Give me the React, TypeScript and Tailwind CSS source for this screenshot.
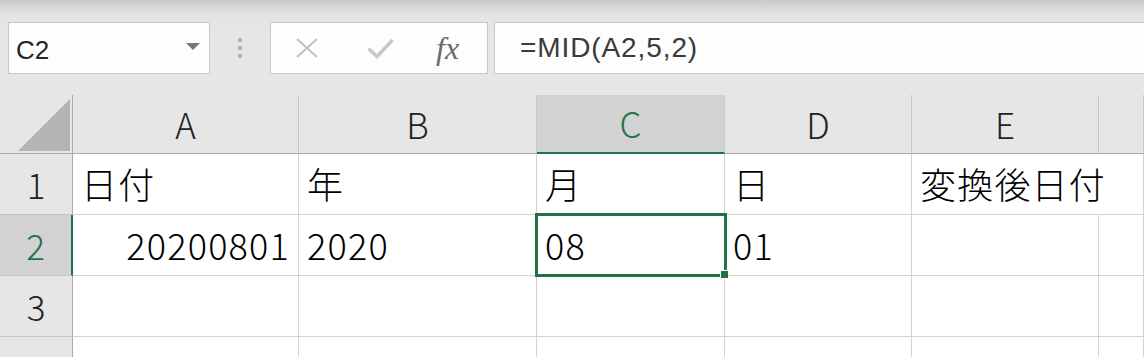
import React from 'react'

const columns = ['A', 'B', 'C', 'D', 'E', '']

type Cell = { text: string; align?: 'right'; overflow?: boolean }

const rows: { n: number; cells: Cell[] }[] = [
  {
    n: 1,
    cells: [
      { text: '日付' },
      { text: '年' },
      { text: '月' },
      { text: '日' },
      { text: '変換後日付', overflow: true },
      { text: '' },
    ],
  },
  {
    n: 2,
    cells: [
      { text: '20200801', align: 'right' },
      { text: '2020' },
      { text: '08' },
      { text: '01' },
      { text: '' },
      { text: '' },
    ],
  },
  { n: 3, cells: [{ text: '' }, { text: '' }, { text: '' }, { text: '' }, { text: '' }, { text: '' }] },
  { n: 4, cells: [{ text: '' }, { text: '' }, { text: '' }, { text: '' }, { text: '' }, { text: '' }] },
]

// active cell is C2
const activeCol = 2
const activeRow = 2

function FormulaBar() {
  return (
    <div className="flex h-[95px] items-start overflow-hidden bg-[linear-gradient(to_bottom,#c8c8c8_0px,#e3e3e3_14px,#e6e6e6_30px)] pl-[8px] pt-[22px]">
      {/* Name box */}
      <div className="flex h-[52px] w-[202px] shrink-0 items-center justify-between border border-[#c6c6c6] bg-[#fdfdfd] pl-[7px] pr-[9px]">
        <span className="mt-[3px] text-[26px] leading-none text-[#262626]">C2</span>
        <svg width="14" height="7" viewBox="0 0 14 7" className="-mt-[4px]">
          <path d="M0 0H14L7 7Z" fill="#777777" />
        </svg>
      </div>

      {/* Grip */}
      <div className="flex h-[52px] w-[60px] shrink-0 flex-col items-center justify-center gap-[4px]">
        <div className="h-[4px] w-[4px] bg-[#b4b4b4]" />
        <div className="h-[4px] w-[4px] bg-[#b4b4b4]" />
        <div className="h-[4px] w-[4px] bg-[#b4b4b4]" />
      </div>

      {/* Cancel / Enter / Insert function */}
      <div className="flex h-[52px] w-[218px] shrink-0 items-center border border-[#c6c6c6] bg-[#fdfdfd] pl-[25px]">
        <svg width="22" height="20" viewBox="0 0 22 20">
          <path d="M1 1L21 19M21 1L1 19" stroke="#c4c4c4" strokeWidth="2.2" />
        </svg>
        <svg width="27" height="21" viewBox="0 0 27 21" className="ml-[49px]">
          <path
            d="M1.5 10.5L10 18.5L25.5 2"
            stroke="#c8c8c8"
            strokeWidth="3.6"
            fill="none"
          />
        </svg>
        <span className="ml-[42px] font-['Liberation_Serif',serif] text-[32px] italic leading-none text-[#6a6a6a]">
          fx
        </span>
      </div>

      {/* Formula input */}
      <div className="-mr-[4px] ml-[6px] flex h-[52px] flex-1 items-center border border-[#c6c6c6] bg-[#fdfdfd] pl-[25px]">
        <span className="text-[28px] leading-none tracking-[0.9px] text-[#3a3a3a]">
          =MID(A2,5,2)
        </span>
      </div>
    </div>
  )
}

function Sheet() {
  return (
    <div className="grid grid-cols-[73px_226px_238px_188px_187px_187px_1fr] font-['Noto_Sans_CJK_JP',sans-serif] font-light">
      {/* corner */}
      <div className="flex h-[59px] items-end justify-end border-r border-b border-r-[#ababab] border-b-[#ababab] bg-[#e6e6e6] pr-[2px] pb-[2px]">
        <svg width="52" height="52" viewBox="0 0 52 52">
          <path d="M0 52L52 0V52Z" fill="#b4b4b4" />
        </svg>
      </div>

      {columns.map((c, i) => {
        const active = i === activeCol
        return (
          <div
            key={i}
            className={
              'flex h-[59px] items-center justify-center border-r border-r-[#c6c6c6] text-[35px] leading-none ' +
              (active
                ? 'border-b-2 border-b-[#217346] bg-[#d2d2d2] text-[#217346]'
                : 'border-b border-b-[#ababab] bg-[#e6e6e6] text-[#222222]')
            }
          >
            <span className="-mt-[2px]">{c}</span>
          </div>
        )
      })}

      {rows.map((row) => (
        <React.Fragment key={row.n}>
          <div
            className={
              'flex h-[61px] items-center justify-center border-b border-b-[#c6c6c6] text-[35px] leading-none ' +
              (row.n === activeRow
                ? 'border-r-2 border-r-[#217346] bg-[#d2d2d2] text-[#217346]'
                : 'border-r border-r-[#ababab] bg-[#e6e6e6] text-[#222222]')
            }
          >
            <span className="-mt-[2px]">{row.n}</span>
          </div>

          {row.cells.map((cell, ci) => {
            const active = row.n === activeRow && ci === activeCol
            return (
              <div
                key={ci}
                className={
                  'relative flex h-[61px] items-center border-b border-b-[#d4d4d4] bg-white px-[8px] text-[36px] leading-none tracking-[1.2px] whitespace-nowrap text-black ' +
                  (cell.overflow ? 'z-[5] border-r border-r-white ' : 'border-r border-r-[#d4d4d4] ') +
                  (cell.align === 'right' ? 'justify-end' : 'justify-start') +
                  (active ? ' z-10' : '')
                }
              >
                <span className="-mt-[3px]">{cell.text}</span>
                {active && (
                  <div className="absolute -top-[2px] -left-[2px] z-10 h-[64px] w-[192px] border-[3px] border-[#217346]">
                    <div className="absolute -right-[5px] -bottom-[5px] h-[9px] w-[9px] border border-white bg-[#217346]" />
                  </div>
                )}
              </div>
            )
          })}
        </React.Fragment>
      ))}
    </div>
  )
}

export default function App() {
  return (
    <div className="h-[357px] w-[1144px] overflow-hidden bg-white font-['Liberation_Sans','Noto_Sans_CJK_JP',sans-serif]">
      <FormulaBar />
      <Sheet />
    </div>
  )
}
